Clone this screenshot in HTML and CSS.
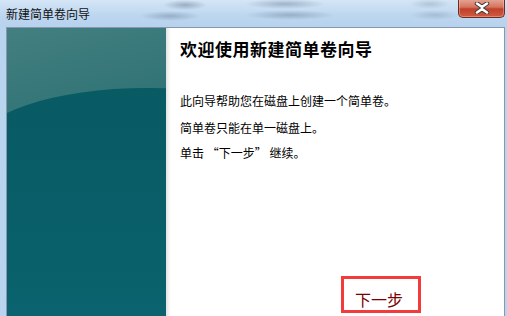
FILE: index.html
```html
<!DOCTYPE html>
<html lang="zh-CN">
<head>
    <meta charset="UTF-8">
    <meta name="viewport" content="width=device-width, initial-scale=1.0">
    <title>新建简单卷向导</title>
    <link rel="stylesheet" href="styles.css">
</head>
<body>
    <div class="window">
        <div class="titlebar">
            <span class="title">新建简单卷向导</span>
            <button class="close" aria-label="关闭">
                <svg width="20" height="12" viewBox="0 0 20 12">
                    <path d="M5 1.5 L10 5 L15 1.5 M5 10.5 L10 7 L15 10.5" fill="none" stroke="#3a3a3a" stroke-width="4.4" stroke-linecap="round" stroke-linejoin="round"/>
                    <path d="M5 1.5 L10 5 L15 1.5 M5 10.5 L10 7 L15 10.5" fill="none" stroke="#fff" stroke-width="2.6" stroke-linecap="round" stroke-linejoin="round"/>
                </svg>
            </button>
        </div>

        <div class="client">
            <div class="side"></div>
            <div class="content">
                <h1>欢迎使用新建简单卷向导</h1>
                <p class="intro">此向导帮助您在磁盘上创建一个简单卷。</p>
                <p>简单卷只能在单一磁盘上。</p>
                <p>单击 “下一步” 继续。</p>

                <div class="actions">
                    <span class="next">下一步</span>
                </div>
            </div>
        </div>
    </div>
</body>
</html>
```

FILE: styles.css
```css
body {
    margin: 0;
    width: 507px;
    height: 316px;
    overflow: hidden;
    font-family: "Noto Sans CJK SC", "DejaVu Sans", sans-serif;
    background: #b9d4ef;
}

.window {
    display: flex;
    flex-direction: column;
    height: 316px;
}

.titlebar {
    height: 27px;
    display: flex;
    justify-content: space-between;
    align-items: flex-start;
    padding-left: 6px;
    background:
        radial-gradient(ellipse 22px 5px at 185px 5px, rgba(90, 110, 135, 0.45), transparent),
        radial-gradient(ellipse 30px 5px at 170px 16px, rgba(80, 100, 125, 0.35), transparent),
        radial-gradient(ellipse 40px 5px at 285px 4px, rgba(90, 110, 135, 0.4), transparent),
        radial-gradient(ellipse 45px 5px at 290px 15px, rgba(80, 100, 125, 0.35), transparent),
        radial-gradient(ellipse 20px 5px at 430px 4px, rgba(110, 130, 150, 0.3), transparent),
        radial-gradient(ellipse 25px 5px at 435px 15px, rgba(110, 130, 150, 0.3), transparent),
        linear-gradient(#d4e5f6, #bcd6ef 60%, #b7d2ee);
}

.title {
    font-size: 12px;
    line-height: 12px;
    margin-top: 8px;
    color: #111;
}

.close {
    width: 47px;
    height: 19px;
    margin-top: -1px;
    margin-right: 2px;
    padding: 0;
    border: 1px solid #6d2b22;
    border-top: none;
    border-radius: 0 0 5px 5px;
    background: linear-gradient(#e7a796, #d37560 45%, #c1402a 55%, #d05a40);
    box-shadow: inset 0 0 0 1px rgba(255, 220, 210, 0.35);
    display: flex;
    justify-content: center;
    align-items: center;
}

.client {
    flex: 1;
    display: flex;
    margin: 0 2px 0 6px;
    border: 1px solid #8797ac;
    border-bottom: none;
}

.side {
    position: relative;
    width: 159px;
    overflow: hidden;
    background: linear-gradient(165deg, #437f80, #2a6f72 45%, #1e6568);
}

.side::after {
    content: "";
    position: absolute;
    left: -30px;
    top: 60px;
    width: 340px;
    height: 400px;
    border-radius: 170px 170px 0 0 / 58px 58px 0 0;
    background: linear-gradient(#085a63, #095f6a 40%, #0b6c79);
}

.content {
    flex: 1;
    display: flex;
    flex-direction: column;
    padding: 11px 0 0 14px;
    background: linear-gradient(90deg, #e2e2e2, #f6f6f6 3px, #fff 5px);
    color: #000;
}

h1 {
    margin: 0 0 34px;
    font-size: 17px;
    line-height: 20px;
    letter-spacing: 0.5px;
    font-weight: bold;
}

p {
    margin: 0 0 9px;
    font-size: 12px;
    line-height: 16px;
}

.intro {
    margin-bottom: 11px;
}

.actions {
    margin-top: auto;
    margin-bottom: 3px;
    padding-left: 161px;
    display: flex;
}

.next {
    width: 63px;
    height: 31px;
    border: 3px solid #f43b3b;
    padding-left: 11px;
    box-sizing: content-box;
    display: flex;
    align-items: flex-end;
    font-size: 16px;
    line-height: 22px;
    color: #7a0000;
}
```
